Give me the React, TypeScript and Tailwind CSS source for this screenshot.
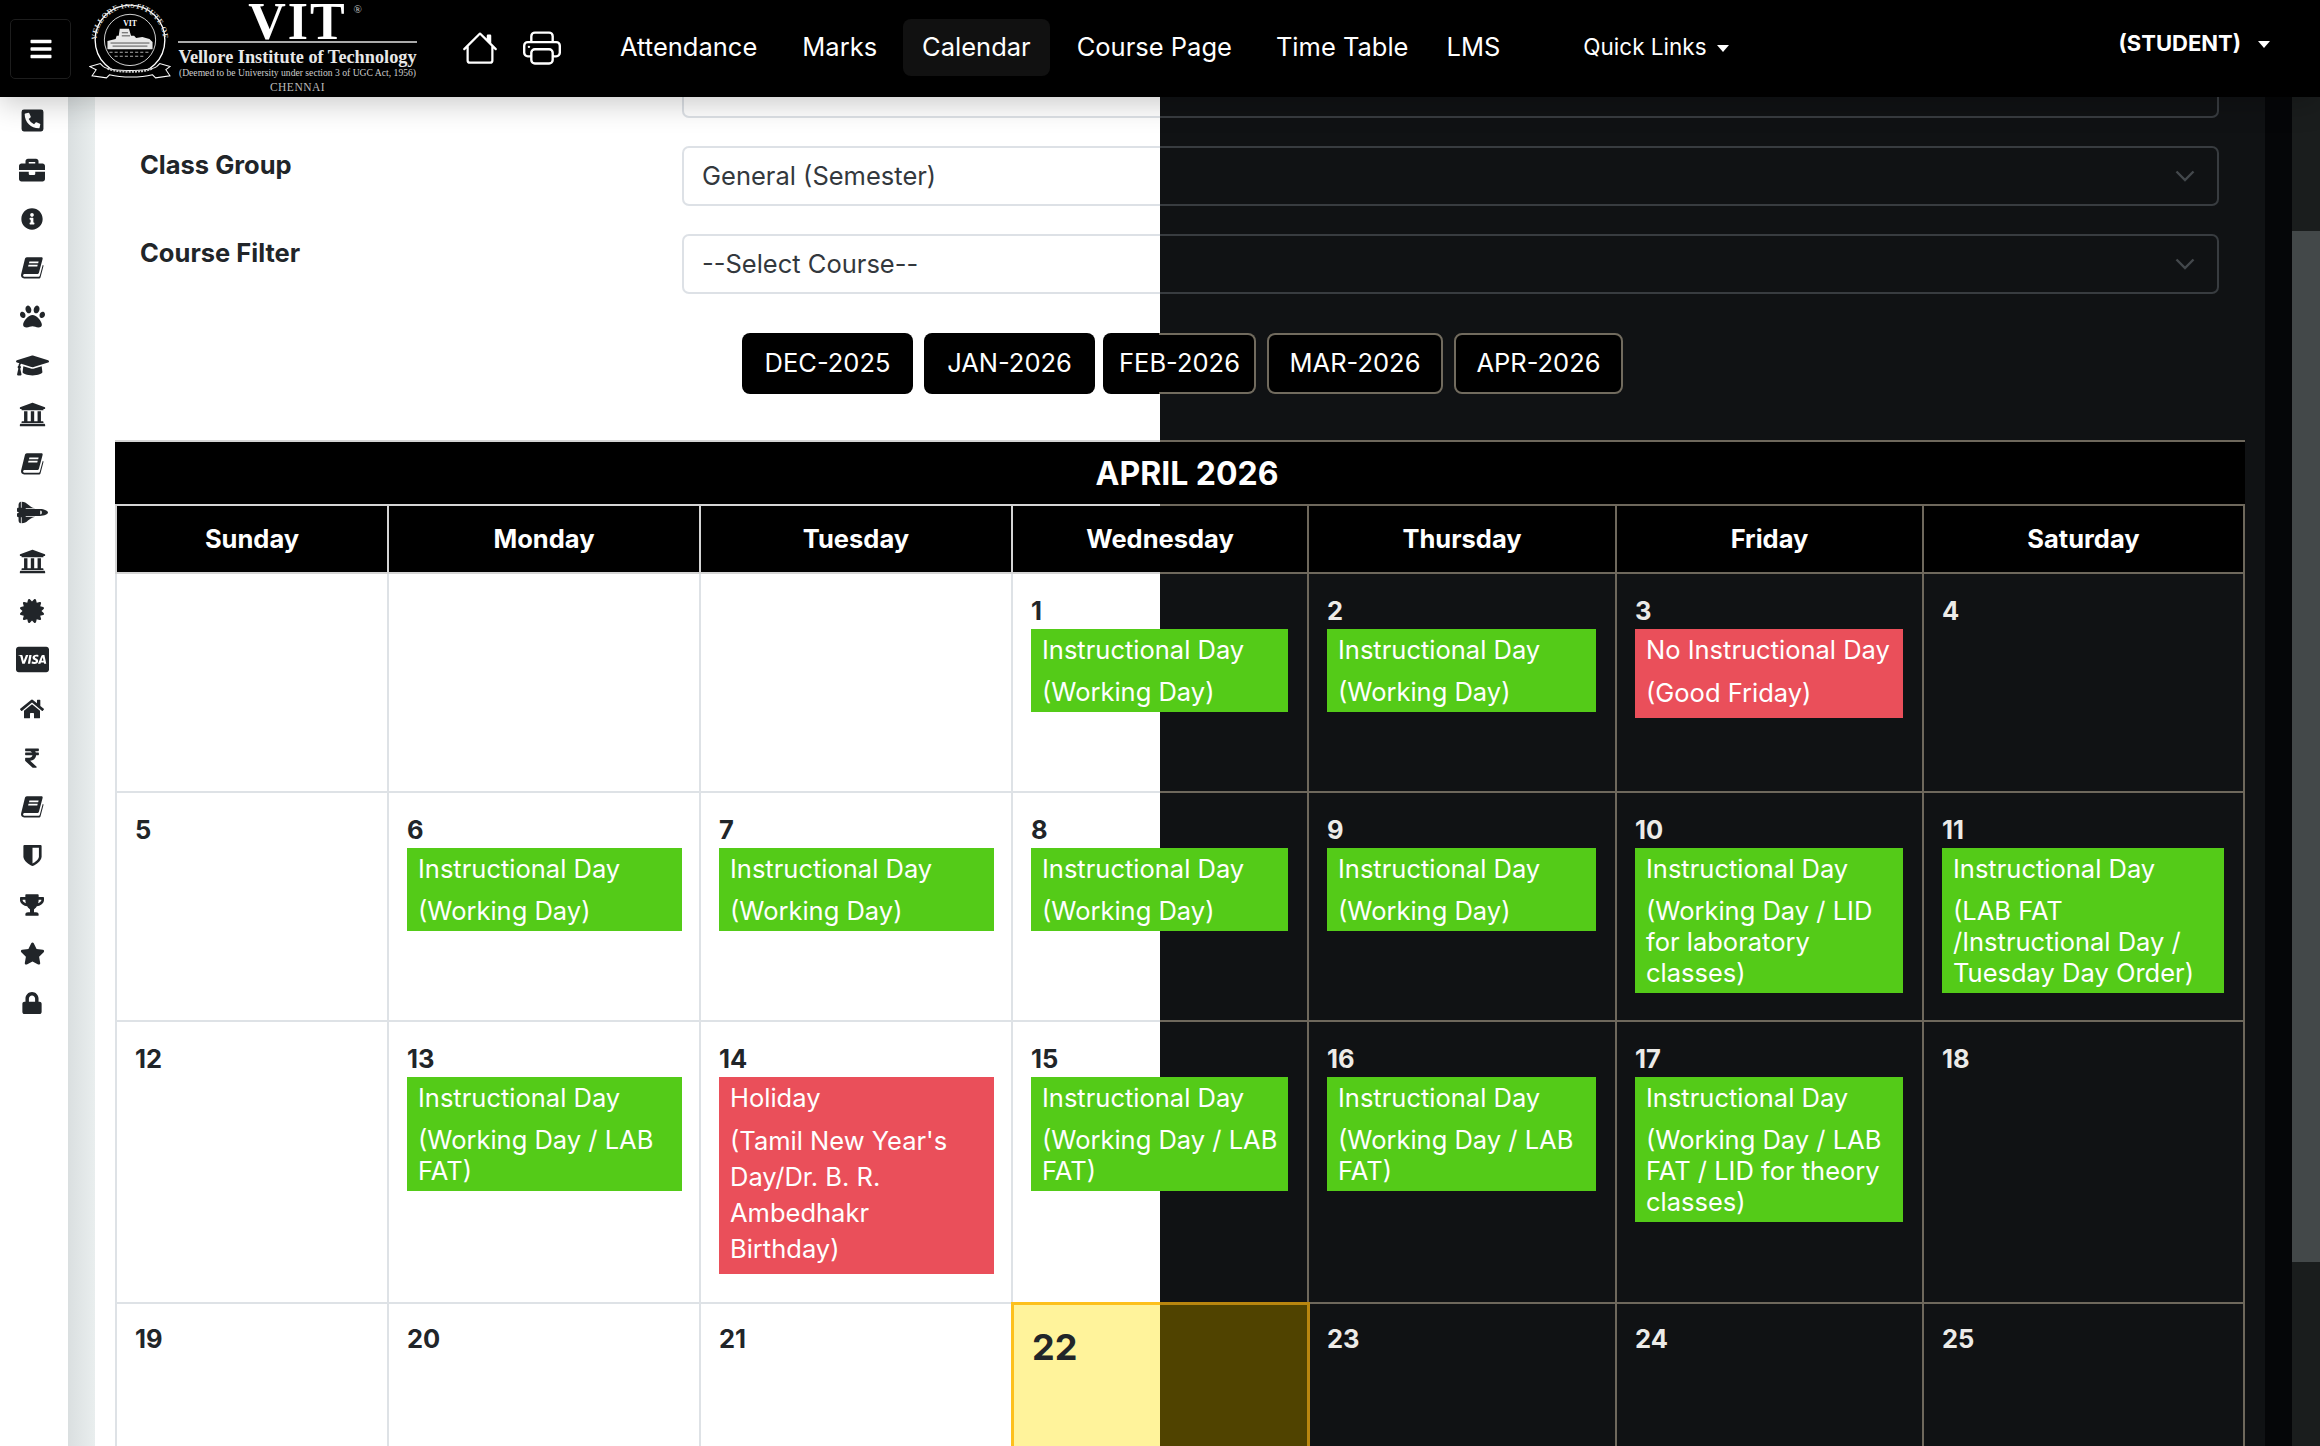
import type { ComponentType, ReactNode } from "react";
import {
  FaBars,
  FaBriefcase,
  FaCcVisa,
  FaCertificate,
  FaGraduationCap,
  FaHome,
  FaInfoCircle,
  FaLock,
  FaPaw,
  FaPhoneSquareAlt,
  FaRupeeSign,
  FaSpaceShuttle,
  FaStar,
  FaTrophy,
  FaUniversity,
} from "react-icons/fa";
import { BsHouse, BsPrinter } from "react-icons/bs";

function BookIcon({ size }: { size?: number }) {
  return (
    <svg width={size} height={size} viewBox="0 0 24 24" fill="currentColor">
      <path d="M6.800 1.200h14.600c1 0 1.500.7 1.200 1.700l-3.600 13.600c-.3 1-1 1.500-2 1.500H5.200c-1.300 0-2 .5-2.100 1.300-.1.900.5 1.500 1.600 1.500h14c.5 0 .8-.2 1-.7l3-11.200.9.600-3 11.500c-.2 1-.9 1.500-1.900 1.500H4.200c-2.200 0-3.600-1.700-3.100-3.900L4.900 3c.3-1.100 1-1.800 1.900-1.800z" />
      <path d="M9.400 5.600h9.200l-.4 1.600H9zM8.500 8.800h9.200l-.4 1.600H8.100z" fill="#fff" />
    </svg>
  );
}

function HalfShieldIcon({ size }: { size?: number }) {
  return (
    <svg width={size} height={size} viewBox="0 0 24 24">
      <path d="M3.500 1h17c.6 0 1 .4 1 1v11c0 4.500-5.500 8.300-9.500 10-4-1.700-9.500-5.500-9.500-10V2c0-.6.4-1 1-1z" fill="currentColor" />
      <path d="M12 3.800h6.700V13c0 2.900-3.600 5.700-6.700 7.300z" fill="#fff" />
    </svg>
  );
}

const SIDE_ICONS: [ComponentType<{ size?: number }>, number][] = [
  [FaPhoneSquareAlt, 25],
  [FaBriefcase, 26],
  [FaInfoCircle, 22],
  [BookIcon, 24],
  [FaPaw, 25],
  [FaGraduationCap, 33],
  [FaUniversity, 27],
  [BookIcon, 24],
  [FaSpaceShuttle, 31],
  [FaUniversity, 27],
  [FaCertificate, 24],
  [FaCcVisa, 33],
  [FaHome, 24],
  [FaRupeeSign, 22],
  [BookIcon, 24],
  [HalfShieldIcon, 23],
  [FaTrophy, 24],
  [FaStar, 25],
  [FaLock, 22],
];

const ROW = "grid grid-cols-[274px_312px_312px_296px_308px_307px_321px]";
const LIGHT_CELL = "border-r-2 border-b-2 border-[#dee2e6]";
const DARK_CELL = "border-r-2 border-b-2 border-[#6e685c]";
const SPLIT_CELL =
  "border-r-2 border-b-2 border-transparent [background:linear-gradient(90deg,#fff_147px,#101214_147px)_padding-box,linear-gradient(90deg,#dee2e6_147px,#6e685c_147px)_border-box]";
const HEAD_SPLIT =
  "border-r-2 border-b-2 border-transparent [background:linear-gradient(#000,#000)_padding-box,linear-gradient(90deg,#d4d4d4_147px,#6e685c_147px)_border-box]";

type Ev = { kind: "green" | "red"; title: string; detail: string };

const working = (detail: string): Ev => ({ kind: "green", title: "Instructional Day", detail });

function Event({ ev }: { ev: Ev }) {
  if (ev.kind === "red") {
    return (
      <div className="bg-[#ea4f5a] pl-[11px] pr-[12px] pt-[3px] pb-[7px] text-[25.500px] text-white">
        <div className="leading-[36px]">{ev.title}</div>
        <div className="mt-[7px] leading-[36px]">{ev.detail}</div>
      </div>
    );
  }
  return (
    <div className="bg-[#54cb18] pl-[11px] pr-[6px] pt-[3px] pb-[5.500px] text-[25.500px] text-white">
      <div className="leading-[36px]">{ev.title}</div>
      <div className="mt-[7.500px] leading-[31px]">{ev.detail}</div>
    </div>
  );
}

function Cell({
  day,
  ev,
  tone,
  first,
}: {
  day?: number;
  ev?: Ev;
  tone: "light" | "split" | "dark";
  first?: boolean;
}) {
  const boxClass = tone === "light" ? LIGHT_CELL : tone === "split" ? SPLIT_CELL : DARK_CELL;
  return (
    <div className={`${boxClass} ${first ? "border-l-2" : ""} ${tone === "light" ? "pr-[17px]" : "pr-[19px]"} pl-[18px] pt-[19px] pb-[27px]`}>
      <div className={`h-[36px] text-[25.500px] font-bold leading-[36px] ${tone === "dark" ? "text-[#ecebe8]" : "text-[#212529]"}`}>
        {day}
      </div>
      {ev && <Event ev={ev} />}
    </div>
  );
}

function WeekRow({ cells, minHeight }: { cells: { day?: number; ev?: Ev }[]; minHeight: string }) {
  return (
    <div className={`${ROW} ${minHeight}`}>
      {cells.map((c, i) => (
        <Cell key={i} day={c.day} ev={c.ev} first={i === 0} tone={i < 3 ? "light" : i === 3 ? "split" : "dark"} />
      ))}
    </div>
  );
}

function Chevron() {
  return (
    <svg width="20" height="12" viewBox="0 0 20 12" fill="none" stroke="#43484c" strokeWidth="2.400">
      <path d="M1.500 1.500 10 10l8.500-8.500" />
    </svg>
  );
}

function FilterRow({ label, value }: { label: string; value: string }) {
  return (
    <div className="mb-[28px] flex">
      <div className="w-[567px] pl-[25px] text-[25.500px] font-bold leading-[38px] text-[#212529]">{label}</div>
      <div className="flex h-[60px] w-[1537px] items-center justify-between rounded-[7px] border-2 border-transparent pl-[18px] pr-[22px] text-[25.500px] text-[#33383d] [background:linear-gradient(90deg,#fff_476px,#101214_476px)_padding-box,linear-gradient(90deg,#dde1e6_478px,#383c40_478px)_border-box]">
        <span>{value}</span>
        <Chevron />
      </div>
    </div>
  );
}

function MonthButton({ children, className }: { children: ReactNode; className: string }) {
  return (
    <button className={`flex h-[61px] items-center justify-center rounded-[8px] text-[25.500px] text-white ${className}`}>
      {children}
    </button>
  );
}

function Seal() {
  return (
    <svg width="82" height="76" viewBox="0 0 80 74" className="shrink-0">
      <defs>
        <path id="sealArc" d="M7.500 36a32.500 32.500 0 1 1 65 0" />
      </defs>
      <circle cx="40" cy="35" r="34" fill="none" stroke="#fff" strokeWidth="1.300" />
      <circle cx="40" cy="35" r="25" fill="none" stroke="#fff" strokeWidth="0.800" />
      <text fill="#ddd" fontFamily="Liberation Serif, serif" fontSize="7.500" fontWeight="700" letterSpacing="0.350">
        <textPath href="#sealArc" startOffset="1">VELLORE INSTITUTE OF TECHNOLOGY</textPath>
      </text>
      <text x="40" y="21" textAnchor="middle" fill="#fff" fontFamily="Liberation Serif, serif" fontSize="7.500" fontWeight="700">
        VIT
      </text>
      <path d="M18 44V36l8-2 1-3h2l1-7h9l2 7h3l2 2 6-1 7 2 3 3v7z" fill="#e8e8e8" />
      <path d="M21 38h38M23 41h34M32 28h6M32 31h8" stroke="#333" strokeWidth="0.800" />
      <path d="M20 47h40M25 51h30" stroke="#aaa" strokeWidth="1" strokeDasharray="3 2" />
      <path d="M1 61l10-3 3 3c8 5 44 5 52 0l3-3 10 3-4 3 4 6-14 2-3-3c-12 3-30 3-42 0l-3 3-14-2 4-6z" fill="#000" stroke="#fff" strokeWidth="1" />
      <path d="M18 63c10 4 34 4 44 0" fill="none" stroke="#ccc" strokeWidth="2" strokeDasharray="2 1" />
    </svg>
  );
}

function Logo() {
  return (
    <div className="flex items-start">
      <div className="mt-[4px]">
        <Seal />
      </div>
      <div className="ml-[7px] flex w-[239px] flex-col items-center [font-family:'Liberation_Serif',serif]">
        <div className="relative mt-[3px] h-[38px] text-[52px] font-bold leading-[38px] tracking-[2px] text-white">
          VIT
          <span className="absolute -right-[15px] -top-[1px] text-[11px] font-normal leading-[14px] tracking-normal text-[#ccc]">®</span>
        </div>
        <div className="h-[2px] w-full bg-[#aaa]" />
        <div className="mt-[3px] whitespace-nowrap text-[18.300px] font-bold leading-[22px] text-[#e8e8e8]">
          Vellore Institute of Technology
        </div>
        <div className="whitespace-nowrap text-[9.650px] leading-[10px] text-[#ccc]">
          (Deemed to be University under section 3 of UGC Act, 1956)
        </div>
        <div className="mt-[2px] text-[11.500px] leading-[14px] tracking-[0.500px] text-[#bbb]">CHENNAI</div>
      </div>
    </div>
  );
}

function Caret({ gap }: { gap: string }) {
  return <span className={`${gap} inline-block border-x-[6px] border-t-[7px] border-x-transparent border-t-white align-[3px]`} />;
}

function Header() {
  return (
    <header className="relative z-10 flex h-[97px] shrink-0 items-center bg-black text-white shadow-[0_6px_28px_rgba(0,0,0,0.22)]">
      <button className="ml-[10px] flex h-[60px] w-[61px] items-center justify-center rounded-[5px] border border-[#1d1d1d]">
        <FaBars size={24} />
      </button>
      <div className="ml-[18px] h-[97px]">
        <Logo />
      </div>
      <BsHouse size={36} className="ml-[45px] mb-[2px]" />
      <BsPrinter size={38} className="ml-[25px] mb-[2px]" />
      <nav className="ml-[59px] mb-[3px] flex items-center text-[25.500px]">
        <span>Attendance</span>
        <span className="ml-[45px]">Marks</span>
        <span className="ml-[26px] flex h-[57px] items-center rounded-[8px] bg-[#111111] px-[19px]">Calendar</span>
        <span className="ml-[27px]">Course Page</span>
        <span className="ml-[44px]">Time Table</span>
        <span className="ml-[38px]">LMS</span>
        <span className="ml-[83px] text-[22.500px]">
          Quick Links
          <Caret gap="ml-[10px]" />
        </span>
      </nav>
      <div className="ml-auto mr-[50px] mb-[11px] text-[22px] font-bold">
        (STUDENT)
        <Caret gap="ml-[17px]" />
      </div>
    </header>
  );
}

function Sidebar() {
  return (
    <aside className="-mt-[1px] flex w-[68px] shrink-0 flex-col items-center bg-white text-[#212529]">
      {SIDE_ICONS.map(([Icon, size], i) => (
        <div key={i} className="flex h-[49px] w-full shrink-0 items-center justify-center pr-[4px]">
          <Icon size={size} />
        </div>
      ))}
    </aside>
  );
}

const weeks: { cells: { day?: number; ev?: Ev }[]; minHeight: string }[] = [
  {
    minHeight: "min-h-[219px]",
    cells: [
      {},
      {},
      {},
      { day: 1, ev: working("(Working Day)") },
      { day: 2, ev: working("(Working Day)") },
      { day: 3, ev: { kind: "red", title: "No Instructional Day", detail: "(Good Friday)" } },
      { day: 4 },
    ],
  },
  {
    minHeight: "min-h-[228px]",
    cells: [
      { day: 5 },
      { day: 6, ev: working("(Working Day)") },
      { day: 7, ev: working("(Working Day)") },
      { day: 8, ev: working("(Working Day)") },
      { day: 9, ev: working("(Working Day)") },
      { day: 10, ev: working("(Working Day / LID for laboratory classes)") },
      { day: 11, ev: working("(LAB FAT /Instructional Day / Tuesday Day Order)") },
    ],
  },
  {
    minHeight: "min-h-[282px]",
    cells: [
      { day: 12 },
      { day: 13, ev: working("(Working Day / LAB FAT)") },
      {
        day: 14,
        ev: { kind: "red", title: "Holiday", detail: "(Tamil New Year's Day/Dr. B. R. Ambedhakr Birthday)" },
      },
      { day: 15, ev: working("(Working Day / LAB FAT)") },
      { day: 16, ev: working("(Working Day / LAB FAT)") },
      { day: 17, ev: working("(Working Day / LAB FAT / LID for theory classes)") },
      { day: 18 },
    ],
  },
];

function Calendar() {
  const headCells = ["Sunday", "Monday", "Tuesday", "Wednesday", "Thursday", "Friday", "Saturday"];
  return (
    <div className="w-[2130px]">
      <div className="flex h-[66px] items-center justify-center border-y-2 border-transparent pl-[14px] pt-[1px] text-[32px] font-bold text-white [background:linear-gradient(#000,#000)_padding-box,linear-gradient(90deg,#d4d4d4_1045px,#6e685c_1045px)_border-box]">
        APRIL 2026
      </div>
      <div className={`${ROW} h-[68px]`}>
        {headCells.map((d, i) => (
          <div
            key={d}
            className={`flex items-center justify-center bg-black text-[25.500px] font-bold text-white ${
              i === 3
                ? HEAD_SPLIT
                : i < 3
                  ? `border-r-2 border-b-2 border-[#d4d4d4] ${i === 0 ? "border-l-2" : ""}`
                  : DARK_CELL
            }`}
          >
            {d}
          </div>
        ))}
      </div>
      {weeks.map((w, i) => (
        <WeekRow key={i} cells={w.cells} minHeight={w.minHeight} />
      ))}
      <div className={`${ROW} h-[200px] -mt-[2px]`}>
        <Cell day={19} tone="light" first />
        <Cell day={20} tone="light" />
        <Cell day={21} tone="light" />
        <div className="-ml-[2px] w-[299px] border-[3px] border-transparent pl-[18px] pt-[24px] [background:linear-gradient(90deg,#fff39b_146px,#504300_146px)_padding-box,linear-gradient(90deg,#fdc01d_149px,#b8860f_149px)_border-box]">
          <div className="text-[36px] font-bold leading-[36px] text-[#212529]">22</div>
        </div>
        <Cell day={23} tone="dark" />
        <Cell day={24} tone="dark" />
        <Cell day={25} tone="dark" />
      </div>
    </div>
  );
}

export default function App() {
  return (
    <div className="flex h-screen flex-col overflow-hidden bg-white [font-family:Inter,sans-serif]">
      <Header />
      <div className="flex min-h-0 flex-1">
        <Sidebar />
        <div className="w-[27px] shrink-0 bg-gradient-to-r from-[#dadfe0] to-[#e9eeee]" />
        <main className="flex min-w-0 flex-1 bg-[linear-gradient(90deg,#fff_1065px,#101214_1065px)]">
          <div className="w-[2170px] shrink-0 overflow-hidden px-[20px]">
            <div className="mb-[28px] ml-[567px] h-[21px] w-[1537px] rounded-b-[7px] border-x-2 border-b-2 border-transparent [background:linear-gradient(90deg,#fff_476px,#101214_476px)_padding-box,linear-gradient(90deg,#dde1e6_478px,#383c40_478px)_border-box]" />
            <FilterRow label="Class Group" value="General (Semester)" />
            <FilterRow label="Course Filter" value="--Select Course--" />
            <div className="ml-[627px] mt-[39px] flex gap-[11px]">
              <MonthButton className="w-[171px] bg-black">DEC-2025</MonthButton>
              <MonthButton className="w-[171px] bg-black">JAN-2026</MonthButton>
              <MonthButton className="-ml-[3px] w-[153px] border-2 border-transparent [background:linear-gradient(#000,#000)_padding-box,linear-gradient(90deg,#000_56px,#716b5e_56px)_border-box]">
                FEB-2026
              </MonthButton>
              <MonthButton className="w-[176px] border-2 border-[#716b5e] bg-black">MAR-2026</MonthButton>
              <MonthButton className="w-[169px] border-2 border-[#716b5e] bg-black">APR-2026</MonthButton>
            </div>
            <div className="mt-[46px]">
              <Calendar />
            </div>
          </div>
          <div className="flex-1 bg-[#050608]" />
        </main>
        <div className="flex w-[28px] shrink-0 flex-col bg-[#1a1d1d]">
          <div className="mt-[134px] h-[1031px] bg-[#434849]" />
        </div>
      </div>
    </div>
  );
}
